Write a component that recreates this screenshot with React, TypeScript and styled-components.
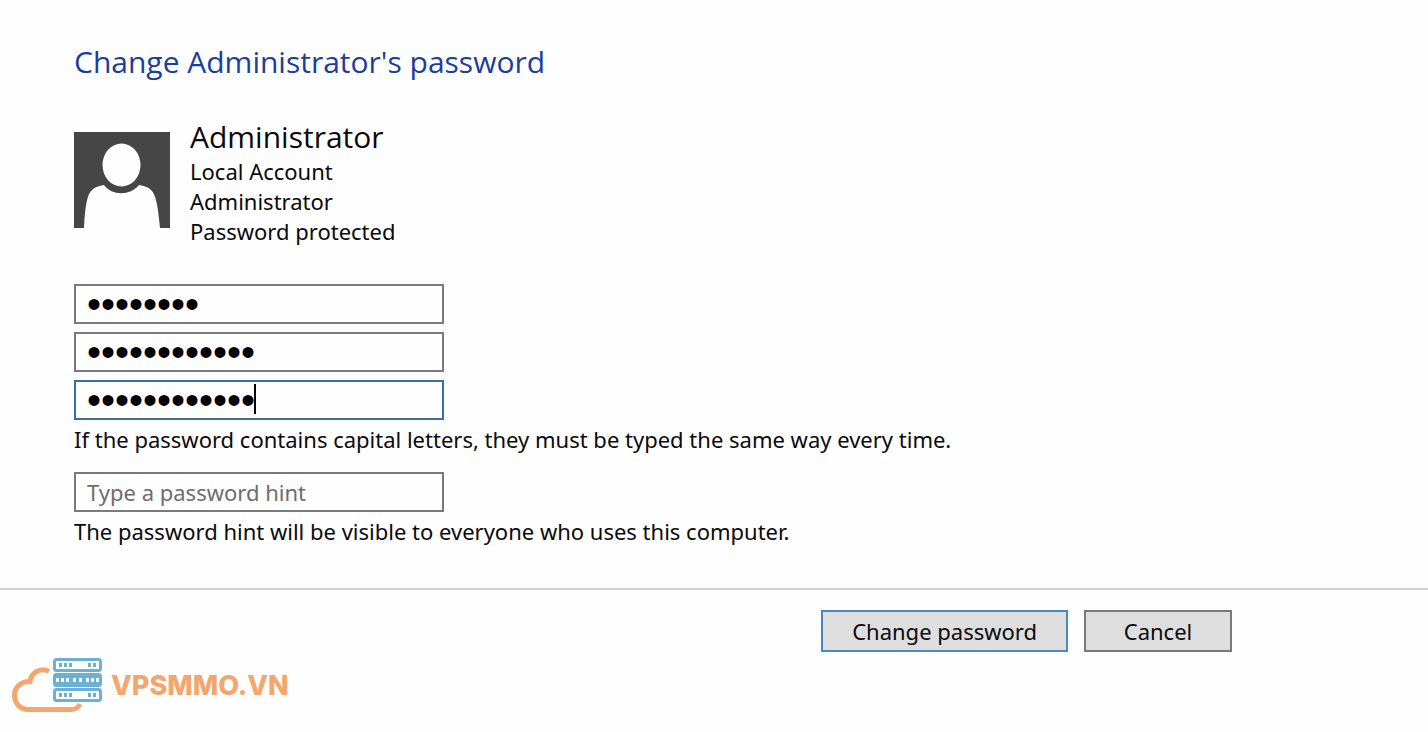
import React from "react";
import styled, { createGlobalStyle } from "styled-components";

const GlobalStyle = createGlobalStyle`
  *, *::before, *::after { box-sizing: border-box; }
  body {
    margin: 0;
    background: #fefefe;
    color: #0a0a0c;
    font: 22px/30px "Noto Sans", "Open Sans", sans-serif;
  }
`;

const Content = styled.main`
  padding: 42px 74px;
`;

const Title = styled.h1`
  margin: 0;
  color: #1a3e9c;
  font-family: "Open Sans", "Noto Sans", sans-serif;
  font-size: 30px;
  font-weight: 400;
  line-height: 40px;
`;

const Account = styled.section`
  display: flex;
  align-items: flex-start;
  gap: 20px;
  margin-top: 36px;
`;

const Avatar = styled.svg`
  flex: none;
  width: 96px;
  height: 96px;
  margin-top: 14px;
`;

const AccountName = styled.h2`
  margin: 0;
  font-family: "Open Sans", "Noto Sans", sans-serif;
  font-size: 30px;
  font-weight: 400;
  line-height: 38px;
`;

const AccountDetails = styled.ul`
  margin: 0;
  padding: 0;
  list-style: none;
`;

const Fields = styled.div`
  display: flex;
  flex-direction: column;
  gap: 8px;
  margin-top: 38px;
`;

const Field = styled.div`
  position: relative;
  width: 370px;
  max-width: 100%;
`;

const Input = styled.input<{ $active?: boolean }>`
  display: block;
  width: 100%;
  height: 40px;
  padding: 0 11px;
  border: 2px solid ${(p) => (p.$active ? "#3b6ea5" : "#7a7a7a")};
  border-radius: 0;
  outline: none;
  background: #fefefe;
  color: #000008;
  font: inherit;

  &::placeholder {
    color: #6d6d6d;
    opacity: 1;
  }

  &[type="password"] {
    font-family: "Liberation Sans", Arial, sans-serif;
    font-size: 40px;
    line-height: 36px;
  }
`;

const Caret = styled.span`
  position: absolute;
  top: 4px;
  left: 180px;
  width: 2px;
  height: 30px;
  background: #000;
`;

const Note = styled.p`
  margin: 4px 0 0;
`;

const HintGroup = styled.div`
  margin-top: 18px;
`;

const Footer = styled.footer`
  border-top: 2px solid #d0d0d0;
`;

const Actions = styled.div`
  display: flex;
  justify-content: flex-end;
  gap: 16px;
  padding: 20px 196px 0 74px;
`;

const Button = styled.button<{ $primary?: boolean }>`
  min-width: 148px;
  height: 42px;
  padding: 0 29px;
  border: 2px solid ${(p) => (p.$primary ? "#4a8abb" : "#7a7a7a")};
  border-radius: 0;
  background: #dedede;
  color: #0a0a0c;
  font: inherit;
`;

const Brand = styled.a`
  display: inline-flex;
  align-items: center;
  gap: 8px;
  margin: 6px 0 0 11px;
  color: #f4a76c;
  font-family: Inter, "Liberation Sans", sans-serif;
  font-size: 27px;
  font-weight: 800;
  text-decoration: none;
`;

const secrets = [
  { id: "current", label: "Current password", value: "abcdefgh" },
  { id: "new", label: "New password", value: "abcdefghijkl" },
  { id: "confirm", label: "Confirm new password", value: "abcdefghijkl", active: true },
];

function ServerLogo() {
  return (
    <svg width="92" height="56" viewBox="0 0 92 56" aria-hidden="true">
      <path
        d="M38 13.500C31 9 20 14 19 23.500C10 23 3.500 30 3.500 37C3.500 46 10 51.500 17 51.500H60C65 51.500 67 50 69 46"
        fill="none"
        stroke="#f4a76c"
        strokeWidth="5"
      />
      {[0, 15, 30].map((y, row) => (
        <g key={y} transform={`translate(42 ${y})`}>
          <rect x="1.500" y="1.500" width="46" height="11" rx="2" fill={row === 1 ? "#6bb1d6" : "#fefefe"} stroke="#6bb1d6" strokeWidth="3" />
          {(row === 1 ? [3, 8, 13, 20, 26, 33, 38, 43] : [6, 11, 16, 35, 40]).map((x) => (
            <rect key={x} x={x} y="5" width="3" height="4" fill={row === 1 ? "#fefefe" : "#6bb1d6"} />
          ))}
        </g>
      ))}
    </svg>
  );
}

export default function App() {
  return (
    <>
      <GlobalStyle />
      <Content>
        <Title>Change Administrator's password</Title>
        <Account>
          <Avatar viewBox="0 0 96 96" aria-hidden="true">
            <path fill="#464646" d="M0 0H96V96H86C84 75 82 62 77 58C74 55 70 54 65 53C56 64 38 64 30 53C25 54 21 55 18 58C13 62 11 75 10 96H0Z" />
            <ellipse cx="47.500" cy="33" rx="19" ry="21.500" fill="#fefefe" />
          </Avatar>
          <div>
            <AccountName>Administrator</AccountName>
            <AccountDetails>
              <li>Local Account</li>
              <li>Administrator</li>
              <li>Password protected</li>
            </AccountDetails>
          </div>
        </Account>
        <form id="password-form" onSubmit={(e) => e.preventDefault()}>
          <Fields>
            {secrets.map((s) => (
              <Field key={s.id}>
                <Input id={s.id} type="password" aria-label={s.label} defaultValue={s.value} $active={s.active} />
                {s.active && <Caret />}
              </Field>
            ))}
          </Fields>
          <Note>If the password contains capital letters, they must be typed the same way every time.</Note>
          <HintGroup>
            <Field>
              <Input id="hint" type="text" aria-label="Password hint" placeholder="Type a password hint" />
            </Field>
            <Note>The password hint will be visible to everyone who uses this computer.</Note>
          </HintGroup>
        </form>
      </Content>
      <Footer>
        <Actions>
          <Button type="submit" form="password-form" $primary>Change password</Button>
          <Button type="button">Cancel</Button>
        </Actions>
        <Brand href="#">
          <ServerLogo />
          VPSMMO.VN
        </Brand>
      </Footer>
    </>
  );
}
